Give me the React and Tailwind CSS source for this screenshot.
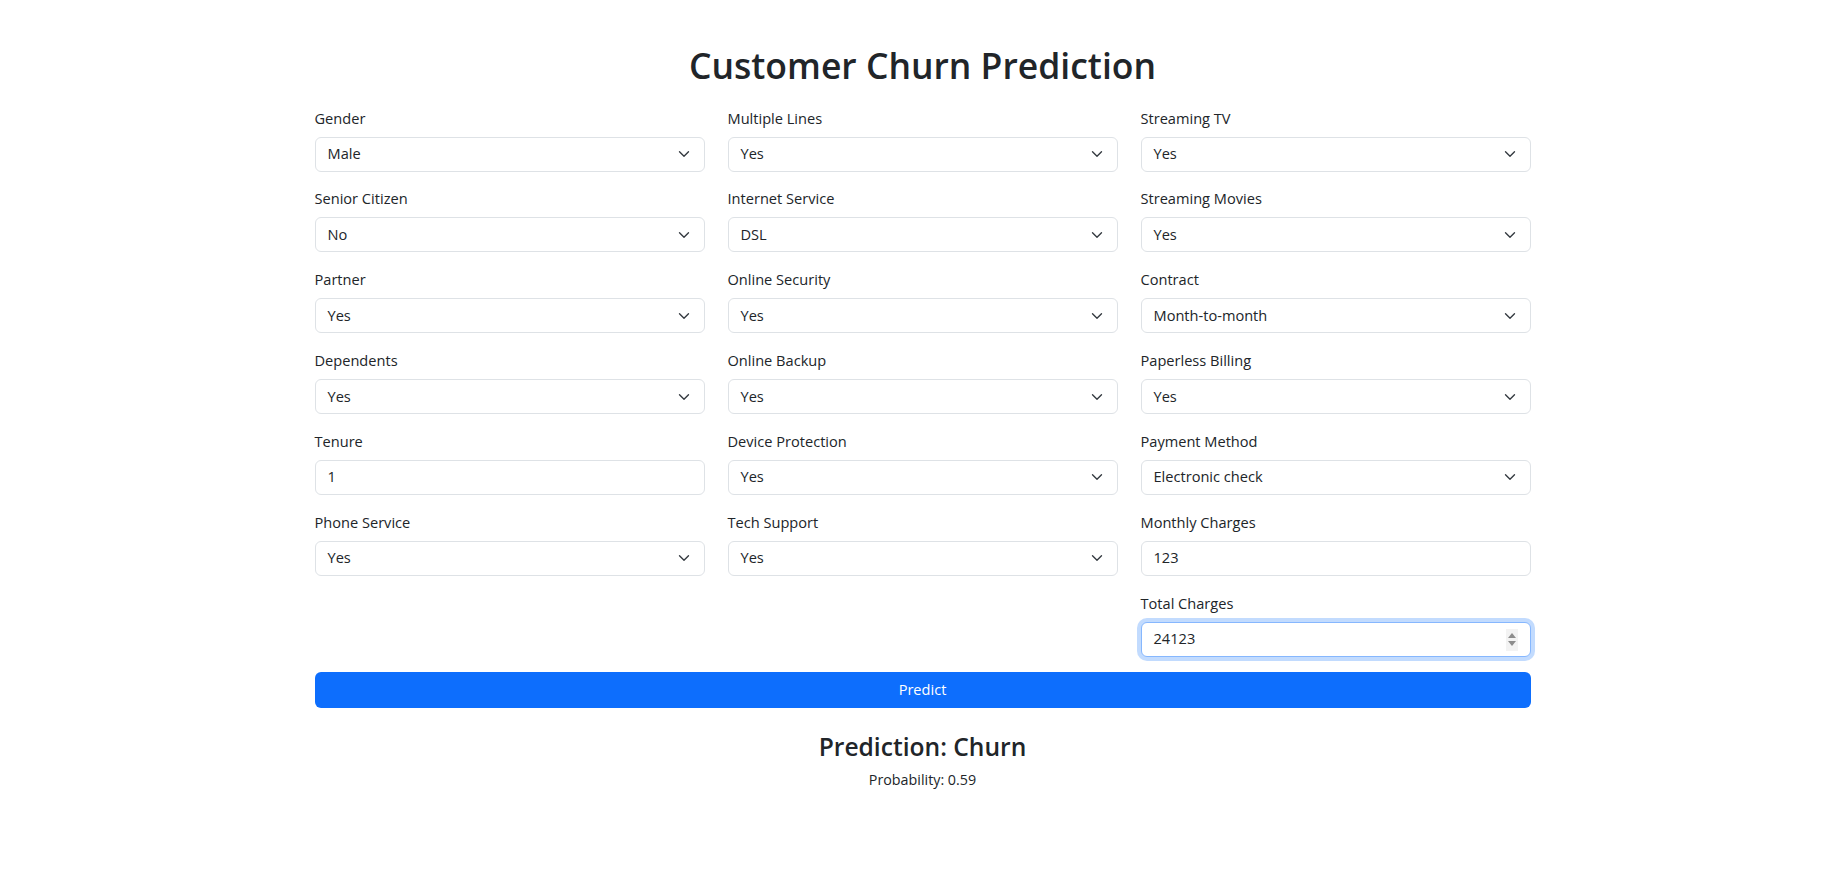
import React from "react";

const FONT = { fontFamily: '"Open Sans", "Noto Sans", Arial, sans-serif' };

function Chevron() {
  return (
    <svg width="12" height="12" viewBox="0 0 16 16" className="shrink-0 mr-[14px]">
      <path d="m2 5 6 6 6-6" fill="none" stroke="#343a40" strokeWidth="1.8" strokeLinecap="round" strokeLinejoin="round" />
    </svg>
  );
}

function SelectField({ label, value }) {
  return (
    <div className="flex flex-col">
      <div className="text-[14.6px] leading-6 mb-[7px] text-[#212529]">{label}</div>
      <div className="h-[35px] flex items-center justify-between border border-[#dee2e6] rounded-[6px] bg-white pl-[12px]">
        <span className="text-[14.6px] text-[#212529]">{value}</span>
        <Chevron />
      </div>
    </div>
  );
}

function InputField({ label, value, focused }) {
  return (
    <div className="flex flex-col">
      <div className="text-[14.6px] leading-6 mb-[7px] text-[#212529]">{label}</div>
      {focused ? (
        <div className="relative h-[35px] flex items-center border border-[#86b7fe] rounded-[6px] bg-white pl-[12px] shadow-[0_0_0_4px_rgba(13,110,253,0.25)]">
          <span className="text-[14.6px] text-[#212529]">{value}</span>
          <div className="absolute right-[12px] top-[6px] w-[12px] h-[22px] bg-[#f3f3f3] flex flex-col items-center justify-center gap-[3px]">
            <svg width="8" height="5" viewBox="0 0 8 5"><path d="M4 0 L8 5 L0 5 Z" fill="#8d8d8d" /></svg>
            <svg width="8" height="5" viewBox="0 0 8 5"><path d="M0 0 L8 0 L4 5 Z" fill="#8d8d8d" /></svg>
          </div>
        </div>
      ) : (
        <div className="h-[35px] flex items-center border border-[#dee2e6] rounded-[6px] bg-white pl-[12px]">
          <span className="text-[14.6px] text-[#212529]">{value}</span>
        </div>
      )}
    </div>
  );
}

export default function App() {
  return (
    <div className="min-h-[872px] bg-white text-[#212529]" style={FONT}>
      <div className="w-[1228px] mx-auto pl-[9px] pr-[3px] pt-[41.5px]">
        <h1 className="text-center text-[35.5px] leading-[46px] font-semibold mb-[18px]">Customer Churn Prediction</h1>
        <div className="grid grid-cols-3 gap-x-[23px] items-start">
          <div className="flex flex-col gap-[14.85px]">
            <SelectField label="Gender" value="Male" />
            <SelectField label="Senior Citizen" value="No" />
            <SelectField label="Partner" value="Yes" />
            <SelectField label="Dependents" value="Yes" />
            <InputField label="Tenure" value="1" />
            <SelectField label="Phone Service" value="Yes" />
          </div>
          <div className="flex flex-col gap-[14.85px]">
            <SelectField label="Multiple Lines" value="Yes" />
            <SelectField label="Internet Service" value="DSL" />
            <SelectField label="Online Security" value="Yes" />
            <SelectField label="Online Backup" value="Yes" />
            <SelectField label="Device Protection" value="Yes" />
            <SelectField label="Tech Support" value="Yes" />
          </div>
          <div className="flex flex-col gap-[14.85px]">
            <SelectField label="Streaming TV" value="Yes" />
            <SelectField label="Streaming Movies" value="Yes" />
            <SelectField label="Contract" value="Month-to-month" />
            <SelectField label="Paperless Billing" value="Yes" />
            <SelectField label="Payment Method" value="Electronic check" />
            <InputField label="Monthly Charges" value="123" />
            <InputField label="Total Charges" value="24123" focused />
          </div>
        </div>
        <button className="mt-[15px] w-full h-[36px] rounded-[6px] bg-[#0d6efd] text-white text-[14.6px] flex items-center justify-center">
          Predict
        </button>
        <div className="mt-[23.7px] flex flex-col items-center">
          <h3 className="text-[24.6px] leading-[31px] font-semibold">Prediction: Churn</h3>
          <p className="mt-[7px] text-[14.3px] leading-[22px]">Probability: 0.59</p>
        </div>
      </div>
    </div>
  );
}
